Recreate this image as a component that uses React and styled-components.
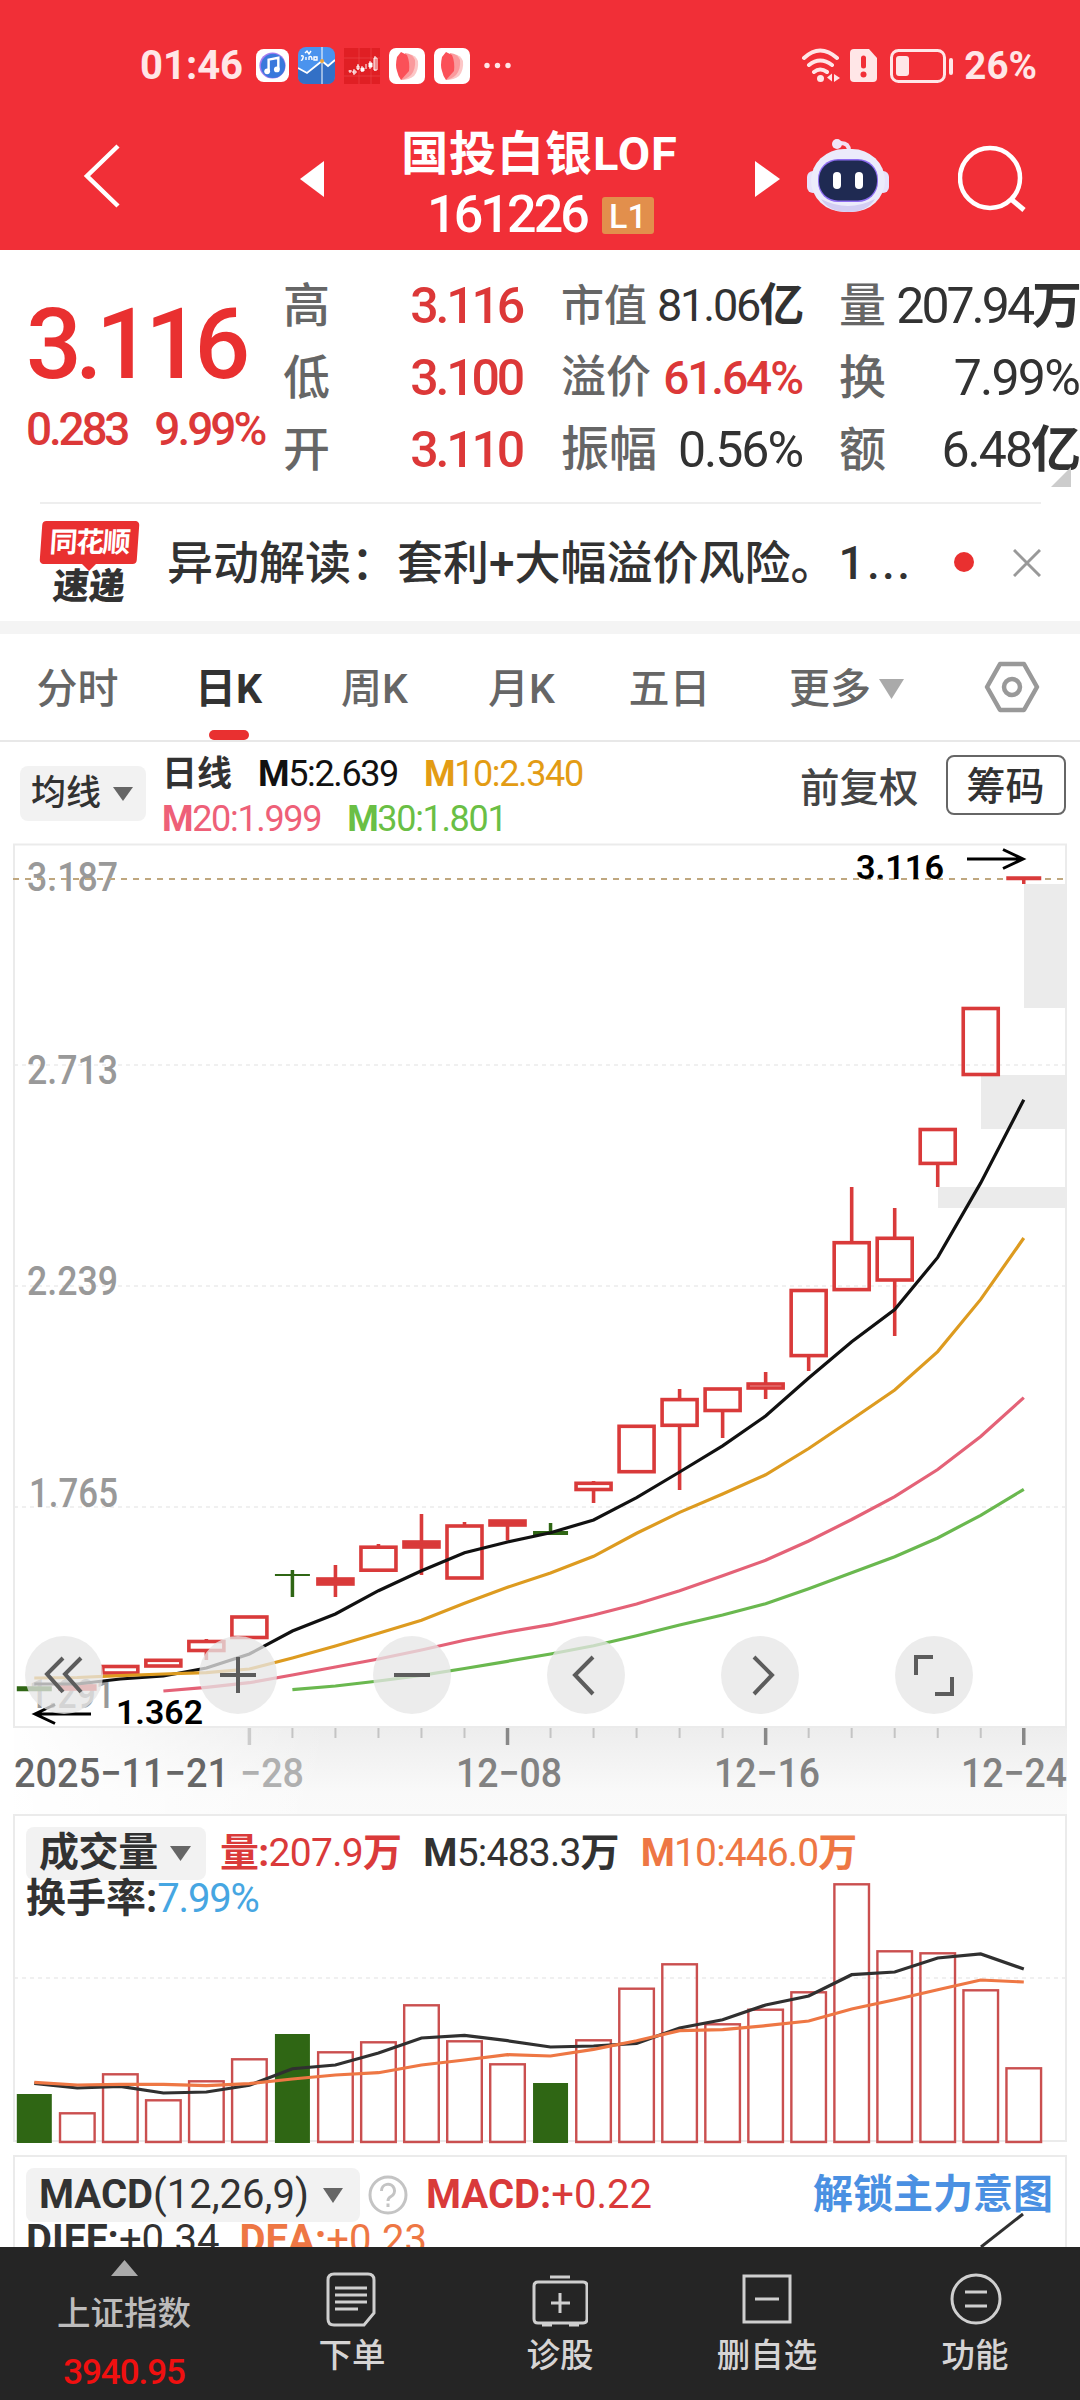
import styled, { createGlobalStyle } from 'styled-components';

const GlobalStyle = createGlobalStyle`
  * { box-sizing: border-box; }
  body {
    margin: 0;
    width: 1080px;
    height: 2400px;
    overflow: hidden;
    background: #ffffff;
    font-family: Roboto, "Noto Sans CJK SC", sans-serif;
    font-weight: 500;
    color: #323232;
  }
  b { font-weight: 700; }
  svg { display: block; flex: none; }
`;

const Screen = styled.div`
  width: 1080px;
  height: 2400px;
  display: flex;
  flex-direction: column;
  overflow: hidden;
  background: #ffffff;
`;

// generic number / label text
const Text = styled.span`
  display: block;
  white-space: nowrap;
  flex: none;
  font-size: ${props => props.$size}px;
  line-height: ${props => props.$line || 60}px;
  font-weight: ${props => props.$weight || 500};
  color: ${props => props.$color || 'inherit'};
  letter-spacing: ${props => props.$track || 0}em;
  margin-left: ${props => props.$left || 0}px;
`;

/* header */
const Header = styled.header`
  height: 250px;
  flex: none;
  background: #f12f37;
  color: #ffffff;
`;

const StatusBar = styled.div`
  height: 130px;
  padding: 1px 43px 0 140px;
  display: flex;
  align-items: center;
  color: #ffe6e7;
`;

const AppIcons = styled.div`
  display: flex;
  align-items: center;
  gap: 9px;
  margin-left: 13px;
  flex: 1;
`;

const StatusRight = styled.div`
  display: flex;
  align-items: center;
`;

const TitleBar = styled.div`
  height: 120px;
  display: grid;
  grid-template-columns: 300px 480px 300px;
`;

const TitleSide = styled.div`
  display: flex;
  align-items: flex-start;
  padding: ${props => props.$pad};
  gap: 69px;
`;

const TitleCenter = styled.div`
  display: flex;
  justify-content: space-between;
  align-items: flex-start;
  & > svg { margin-top: 31px; }
`;

const FundName = styled.div`
  display: flex;
  flex-direction: column;
  align-items: center;
`;

const CodeRow = styled.div`
  display: flex;
  align-items: center;
  gap: 15px;
  margin: 4px 0 0 2px;
`;

const LevelTag = styled.span`
  width: 52px;
  height: 37px;
  background: #e28f4c;
  border-radius: 3px;
  font-size: 34px;
  line-height: 38px;
  text-align: center;
`;

/* quote */
const Quote = styled.section`
  height: 252px;
  flex: none;
  position: relative;
  display: grid;
  grid-template-columns: 283px 239px 39px 241px 37px 240px;
  padding-top: 20px;
`;

const PriceBlock = styled.div`
  padding: 24px 0 0 26px;
`;

const ChangeRow = styled.div`
  display: flex;
  gap: 27px;
  margin-top: 3px;
`;

const StatColumn = styled.div`
  display: flex;
  flex-direction: column;
  grid-column: ${props => props.$col};
`;

const Stat = styled.div`
  height: 72px;
  display: flex;
  align-items: center;
  justify-content: space-between;
  white-space: nowrap;
`;

const Corner = styled.i`
  position: absolute;
  right: 9px;
  bottom: 15px;
  border-left: 20px solid transparent;
  border-bottom: 20px solid #cccccc;
`;

/* news */
const News = styled.section`
  height: 119px;
  flex: none;
  margin: 0 39px 0 40px;
  border-top: 2px solid #eeeeee;
  display: flex;
  align-items: center;
`;

const NewsLogo = styled.div`
  width: 98px;
  height: 84px;
  margin-top: 1px;
  display: flex;
  flex-direction: column;
  align-items: center;
`;

const LogoBadge = styled.div`
  width: 97px;
  height: 43px;
  background: #e93030;
  border-radius: 4px;
  transform: skewX(-4deg);
  color: #ffffff;
  font-size: 28px;
  font-weight: 700;
  line-height: 43px;
  letter-spacing: -1.5px;
  text-align: center;
  white-space: nowrap;
`;

const LogoPin = styled.i`
  border: 7px solid transparent;
  border-top-color: #e93030;
  border-bottom: 0;
`;

const LogoText = styled.div`
  font-size: 36px;
  font-weight: 900;
  line-height: 32px;
  transform: skewX(-5deg);
  white-space: nowrap;
`;

const Headline = styled.div`
  margin-left: 29px;
  width: 758px;
  font-size: 46px;
  font-weight: 500;
  line-height: 60px;
  white-space: nowrap;
  overflow: hidden;
  span {
    margin-left: 2px;
    letter-spacing: 2.3px;
  }
`;

const Dot = styled.i`
  width: 20px;
  height: 20px;
  border-radius: 50%;
  background: #e93030;
  margin: -2px 39px 0 auto;
`;

/* tabs */
const Tabs = styled.nav`
  height: 121px;
  flex: none;
  border-top: 13px solid #f4f4f4;
  border-bottom: 2px solid #e8e8e8;
  display: grid;
  grid-template-columns: 155px 147px 145px 149px 147px 207px 124px;
  color: #666666;
`;

const Tab = styled.div`
  position: relative;
  display: flex;
  align-items: center;
  justify-content: center;
  gap: 8px;
  white-space: nowrap;
  font-size: 41px;
  line-height: 106px;
  height: 106px;
  padding-top: ${props => (props.$icon ? 0 : 3)}px;
  font-weight: ${props => (props.$active ? 700 : 500)};
  color: ${props => (props.$active ? '#323232' : '#666666')};
`;

const ActiveBar = styled.i`
  position: absolute;
  bottom: 0;
  left: 54px;
  width: 40px;
  height: 10px;
  border-radius: 5px;
  background: #e93030;
`;

/* moving average bar */
const AverageBar = styled.section`
  height: 101px;
  flex: none;
  display: flex;
  align-items: flex-start;
  padding: 0 13px 0 20px;
`;

const Picker = styled.div`
  width: ${props => props.$width}px;
  height: ${props => props.$height}px;
  margin-top: ${props => props.$top || 0}px;
  padding-left: ${props => props.$pad}px;
  flex: none;
  background: #f2f2f2;
  border-radius: 8px;
  display: flex;
  align-items: center;
  gap: ${props => props.$gap || 12}px;
`;

const Legend = styled.div`
  width: 560px;
  margin: 10px 0 0 16px;
`;

const LegendRow = styled.div`
  display: flex;
  gap: ${props => props.$gap}px;
`;

const ChipButton = styled.div`
  width: 120px;
  height: 60px;
  margin: 13px 0 0 27px;
  border: 2px solid #666666;
  border-radius: 8px;
  font-size: 39px;
  line-height: 61px;
  text-align: center;
  white-space: nowrap;
`;

/* charts */
const PriceChart = styled.section`
  position: relative;
  height: 971px;
  flex: none;
`;

const ChartTools = styled.div`
  position: absolute;
  left: 25px;
  top: 793px;
  display: flex;
  gap: 96px;
`;

const ToolButton = styled.div`
  width: 78px;
  height: 78px;
  border-radius: 50%;
  background: rgba(230, 230, 230, 0.76);
`;

const Panel = styled.section`
  position: relative;
  height: ${props => props.$height}px;
  flex: none;
`;

const PanelLegend = styled.div`
  position: absolute;
  left: 26px;
  top: 12px;
  right: 27px;
`;

const PanelRow = styled.div`
  display: flex;
  align-items: center;
`;

const HelpIcon = styled.svg`
  margin-left: 8px;
`;

const PanelLink = styled(Text)`
  margin-left: auto;
`;

/* bottom bar */
const BottomBar = styled.footer`
  height: 153px;
  flex: none;
  position: relative;
  background: #252525;
  display: grid;
  grid-template-columns: 248px 208px 208px 206px 210px;
  color: #d6d4d4;
`;

const NavItem = styled.div`
  display: flex;
  flex-direction: column;
  align-items: center;
  padding-top: ${props => props.$top || 24}px;
`;

const Triangle = ({ w = 21, h = 15, color = '#666666' }) => (
  <svg width={w} height={h} viewBox="0 0 20 14" preserveAspectRatio="none">
    <path d="M0 0H20L10 14Z" fill={color} />
  </svg>
);

const FlameIcon = () => (
  <svg width="36" height="36" viewBox="0 0 36 36">
    <rect width="36" height="36" rx="7" fill="#fff" />
    <path d="M19 6Q27 7 29 13 30 22 25 28 20 32 12 32Z" fill="#fcc6c6" />
    <path d="M16 5Q24 6 26 12 27 21 22 27 18 31 12 32Z" fill="#fa9a9d" />
    <path d="M12 4 18 7Q21 14 20 23L12 32Q9 28 8 23 6 18 8 9Z" fill="#fb5058" />
  </svg>
);

const first = 34.3;
const step = 43.02;
const cx = i => first + i * step;
const points = (values, start = 0) =>
  values.map((v, i) => `${cx(i + start).toFixed(1)},${v}`).join(' ');

// [bodyTop, bodyBottom, wickTop, wickBottom]
const candles = [
  [1688.7, 1688.7, 1688.7, 1688.7, 'down', 5],
  [1686, 1689, 1686, 1689],
  [1666.5, 1673, 1665, 1673],
  [1660.3, 1666, 1659, 1666],
  [1641.5, 1650.5, 1639, 1660],
  [1617, 1637.5, 1617, 1637.5],
  [1575, 1575, 1570, 1597, 'down', 2],
  [1579, 1584, 1565, 1597],
  [1547.2, 1570.2, 1544, 1570],
  [1542, 1547, 1514, 1575],
  [1526, 1578, 1522, 1578],
  [1521, 1525, 1521, 1540.5],
  [1533, 1533, 1523, 1535, 'down', 4],
  [1483.3, 1489.5, 1481, 1503],
  [1426.3, 1471.7, 1426, 1471],
  [1399.6, 1425.3, 1389, 1490],
  [1389, 1410.5, 1389, 1438],
  [1384, 1388, 1372, 1399],
  [1290.5, 1355.6, 1290, 1371],
  [1242.7, 1289.6, 1187, 1289],
  [1238.3, 1280, 1208, 1336],
  [1129.5, 1163.4, 1129, 1187],
  [1008.5, 1074.5, 1008, 1074],
  [878.3, 878.3, 878, 884, 'flat', 4],
];

const ma5 = [1684, 1684, 1679, 1676, 1668, 1654, 1631, 1614, 1590.7, 1570.7, 1552.7, 1542, 1532.7, 1520, 1497.6, 1472, 1445.8, 1416, 1378, 1341.8, 1309.6, 1257.4, 1182.9, 1099.8];
const ma10 = [1678, 1677.5, 1675.7, 1674, 1672.7, 1669, 1658, 1646, 1633.3, 1620.3, 1603.3, 1587.3, 1573, 1556.3, 1533.3, 1512.4, 1494, 1474.8, 1448.5, 1419.5, 1390, 1351.6, 1299.4, 1238];
const ma20 = [1691, 1687.3, 1682.7, 1675, 1667, 1659, 1650, 1640.3, 1632, 1624.7, 1615, 1604, 1590.7, 1575.7, 1560.3, 1541, 1519.5, 1496.7, 1469.5, 1436.4, 1397.6];
const ma30 = [1689.7, 1686, 1681, 1675.3, 1668.5, 1661.3, 1654, 1645.7, 1635.7, 1625, 1615, 1603.7, 1588.7, 1572.7, 1556.7, 1538, 1515.3, 1489.3];

const volumes = [2094, 2113.3, 2074.3, 2100.3, 2081.3, 2059.3, 2034, 2052.3, 2042.3, 2005.3, 2041.3, 2064.3, 2083, 2040.3, 1988.7, 1964.3, 2024.3, 2009.7, 1992.3, 1884.3, 1951.3, 1953.3, 1990.3, 2068.3];
const vol5 = [2083.3, 2088, 2086.3, 2093, 2092, 2085.3, 2068.7, 2065, 2053, 2038, 2035.3, 2040.7, 2047, 2046, 2043.3, 2028, 2019.7, 2005, 1996, 1974.7, 1972, 1958, 1954, 1969];
const vol10 = [2082.3, 2085, 2084.3, 2084.3, 2085.7, 2083.7, 2079, 2075, 2072.7, 2065, 2060, 2054.7, 2056, 2049.3, 2040.7, 2030.7, 2029.7, 2025.7, 2021, 2009, 1999.7, 1989.7, 1980, 1982];

const priceLabels = [
  ['3.187', 891, 27, 91],
  ['2.713', 1084, 27, 91],
  ['2.239', 1295, 27, 91],
  ['1.765', 1507, 29, 89],
  ['1.291', 1708, 29, 86],
];

const dateLabels = [
  ['2025−11−21', 14, 215, '#666'],
  ['−28', 240, 64, '#b0b0b0'],
  ['12−08', 456, 106, '#828282'],
  ['12−16', 714, 106, '#828282'],
  ['12−24', 961, 106, '#828282'],
];

const Candle = ({ data, i }) => {
  const [top, bottom, high, low, kind, thick] = data;
  const x = cx(i);
  const color = kind === 'down' ? '#2f6614' : '#d93a3a';
  if (kind) {
    return (
      <g stroke={color}>
        <path d={`M${x - 17.5} ${top}H${x + 17.5}`} strokeWidth={thick} />
        {low > high && <path d={`M${x} ${high}V${low}`} strokeWidth="3.5" />}
      </g>
    );
  }
  return (
    <g stroke={color} strokeWidth="3.6" fill="none">
      {high < top && <path d={`M${x} ${high}V${top}`} />}
      {low > bottom && <path d={`M${x} ${bottom}V${low}`} />}
      <rect x={x - 17.5} y={top} width="35" height={bottom - top} fill={[7, 9, 11].includes(i) ? color : 'none'} />
    </g>
  );
};

const tools = ['M38 22 22 38 38 56M56 22 40 38 56 56', 'M21 39H57M39 21V57', 'M21 39H57', 'M46 21 28 39 46 58', 'M33 21 51 39 33 58', 'M21 39V21H38M57 41V58H40'];

const navItems = [
  ['下单', <path key="a" d="M9 3H43Q49 3 49 9V42L39 54H9Q3 54 3 48V9Q3 3 9 3ZM10 17H42M10 24H42M10 31H42M10 38H33" />],
  ['诊股', <path key="b" d="M17 6H37M5 11H50Q54 11 54 15V48Q54 52 50 52H5Q1 52 1 48V15Q1 11 5 11ZM27 22V42M18 32H37M9 54H19M36 54H46" />],
  ['删自选', <path key="c" d="M4 5H50V51H4ZM15 28H39" />],
  ['功能', <path key="d" d="M4 28A24 24 0 1 0 52 28A24 24 0 1 0 4 28M17 21H39M17 35H39" />],
];

const App = () => (
  <Screen>
    <GlobalStyle />
    <Header>
      <StatusBar>
        <Text $size={40} $weight={700}>01:46</Text>
        <AppIcons>
          <svg width="33" height="33" viewBox="0 0 34 34">
            <rect width="34" height="34" rx="8" fill="#fff" />
            <circle cx="17" cy="17" r="13.5" fill="#a77cf0" />
            <circle cx="17.5" cy="17.5" r="12.5" fill="#3a78dc" />
            <path d="M13 23V11L23 9V21" fill="none" stroke="#fff" strokeWidth="2.5" />
            <circle cx="11.5" cy="23" r="3" fill="#fff" />
            <circle cx="21.5" cy="21" r="3" fill="#fff" />
          </svg>
          <svg width="37" height="37" viewBox="0 0 37 37">
            <rect width="37" height="37" rx="8" fill="#4a93ee" />
            <path d="M0 21 9 26 24 14 30 19 37 13V29Q37 37 29 37H8Q0 37 0 29Z" fill="#3370c6" />
            <path d="M0 21 9 26 24 14 30 19 37 13" fill="none" stroke="#fff" strokeWidth="1.8" />
            <path d="M24 0V37" stroke="#fff" />
            <path d="M7 6 9 4 11 7 13 4M3 9Q6 8 5 11T3 13M8 10V13M11 13V10Q14 8 14 13M19 10H16V13H19Z" fill="none" stroke="#fff" strokeWidth="1.4" />
            <circle cx="24" cy="14" r="2" fill="#f0a43a" />
          </svg>
          <svg width="36" height="36" viewBox="0 0 36 36">
            <rect width="36" height="36" fill="#e01f24" />
            <path d="M0 10H36M0 28H36M15 0V36M27 0V36" stroke="#ee4a4e" strokeWidth=".6" />
            <path d="M6 22V25M10 21V27M14 16V22M18 18V24M22 16V21M26 13V21M31 8V23" stroke="#fff" strokeWidth="1" />
            <path d="M4.500 23H8M17 20H20V23H17ZM25 15H28V19H25Z" stroke="#fff" fill="#fff" strokeWidth="1" />
            <path d="M9 23H12V25H9ZM13 18H15V21H13ZM30 10H33V22H30Z" stroke="#fff" fill="none" strokeWidth="1" />
          </svg>
          <FlameIcon />
          <FlameIcon />
          <svg width="36" height="8" viewBox="0 0 36 8" fill="#ffe6e7">
            <circle cx="8" cy="3.500" r="2.700" /><circle cx="18.500" cy="3.500" r="2.700" /><circle cx="29" cy="3.500" r="2.700" />
          </svg>
        </AppIcons>
        <StatusRight>
          <svg width="41" height="36" viewBox="0 0 41 36" fill="none" stroke="#ffe6e7" strokeWidth="4" strokeLinecap="round">
            <path d="M3 10Q19-5 36 10M8 17Q19 8 31 17M13 24Q19 19 26 24" />
            <circle cx="19.500" cy="30.500" r="3.500" fill="#ffe6e7" stroke="none" />
            <path d="M26 29.500 31 25.500V33.500ZM33 26 39 30 33 34Z" fill="#ffe6e7" stroke="none" />
          </svg>
          <svg width="36" height="34" viewBox="-8 0 36 34">
            <path d="M4 0H19L27 9V29Q27 33 23 33H4Q0 33 0 29V4Q0 0 4 0Z" fill="#ffe6e7" />
            <path d="M13.500 9V17" stroke="#f12f37" strokeWidth="5" strokeLinecap="round" />
            <circle cx="13.500" cy="25.500" r="3" fill="#f12f37" />
          </svg>
          <svg width="76" height="34" viewBox="-12 0 76 34">
            <rect x="1.500" y="1.500" width="53" height="31" rx="7" fill="none" stroke="#ffe6e7" strokeWidth="3" />
            <rect x="6" y="7" width="13" height="20" rx="3" fill="#ffe6e7" />
            <rect x="59" y="9" width="4" height="17" rx="2" fill="#ffe6e7" />
          </svg>
          <Text $size={38.5} $weight={700} $left={10}>26%</Text>
        </StatusRight>
      </StatusBar>

      <TitleBar>
        <TitleSide $pad="13px 0 0 82px">
          <svg width="44" height="66" viewBox="0 0 44 66" fill="none" stroke="#fff" strokeWidth="4.500">
            <path d="M36 3 5 33 36 63" />
          </svg>
        </TitleSide>
        <TitleCenter>
          <svg width="24" height="36" viewBox="0 0 24 36"><path d="M24 0V36L0 18Z" fill="#fff" /></svg>
          <FundName>
            <Text $size={47} $weight={700} $line={48} $track={0.02}>国投白银LOF</Text>
            <CodeRow>
              <Text $size={52} $line={66} $track={-0.056}>161226</Text>
              <LevelTag>L1</LevelTag>
            </CodeRow>
          </FundName>
          <svg width="25" height="36" viewBox="0 0 25 36"><path d="M0 0V36L25 18Z" fill="#fff" /></svg>
        </TitleCenter>
        <TitleSide $pad="7px 0 0 27px">
          <svg width="82" height="78" viewBox="0 0 82 78">
            <path d="M42 14Q42 6 34 6H30" fill="none" stroke="#f3dff0" strokeWidth="4" />
            <circle cx="30" cy="7" r="5" fill="#f1e6fa" />
            <rect x="0" y="34" width="12" height="22" rx="6" fill="#e7e2fb" />
            <rect x="70" y="34" width="12" height="22" rx="6" fill="#e7e2fb" />
            <rect x="4" y="12" width="74" height="63" rx="33" fill="#ecebfb" />
            <path d="M14 62Q41 76 68 62Q60 75 41 75T14 62" fill="#d3cdf3" />
            <rect x="11" y="22" width="60" height="43" rx="20" fill="#8d6cf0" />
            <rect x="12" y="23.500" width="58" height="40" rx="19" fill="#1f2a52" />
            <rect x="26" y="35" width="8" height="17" rx="4" fill="#fff" />
            <rect x="48" y="35" width="8" height="17" rx="4" fill="#fff" />
          </svg>
          <svg width="70" height="78" viewBox="0 -7 70 78" fill="none" stroke="#fff" strokeWidth="4.500">
            <circle cx="32" cy="34" r="30" /><path d="M53 55 66 66" strokeWidth="5" />
          </svg>
        </TitleSide>
      </TitleBar>
    </Header>

    <Quote>
      <PriceBlock>
        <Text $size={98} $line={102} $color="#e93030" $track={-0.066}>3.116</Text>
        <ChangeRow>
          <Text $size={46} $line={61} $color="#dc3838" $track={-0.07}>0.283</Text>
          <Text $size={46} $line={61} $color="#dc3838" $track={-0.065}>9.99%</Text>
        </ChangeRow>
      </PriceBlock>
      <StatColumn $col={2}>
        {[['高', '3.116'], ['低', '3.100'], ['开', '3.110']].map(([k, v]) => (
          <Stat key={k}>
            <Text $size={47} $color="#666">{k}</Text>
            <Text $size={50} $color="#dc3838" $track={-0.063}>{v}</Text>
          </Stat>
        ))}
      </StatColumn>
      <StatColumn $col={4}>
        <Stat>
          <Text $size={43} $color="#666">市值</Text>
          <Text $size={45} $weight={400} $track={-0.048}>81.06<b>亿</b></Text>
        </Stat>
        <Stat>
          <Text $size={45} $color="#666">溢价</Text>
          <Text $size={46} $color="#dc3838" $track={-0.045}>61.64%</Text>
        </Stat>
        <Stat>
          <Text $size={48} $color="#666">振幅</Text>
          <Text $size={50} $weight={400} $track={-0.04}>0.56%</Text>
        </Stat>
      </StatColumn>
      <StatColumn $col={6}>
        <Stat>
          <Text $size={47} $color="#666">量</Text>
          <Text $size={50} $weight={400} $track={-0.06}>207.94<b>万</b></Text>
        </Stat>
        <Stat>
          <Text $size={47} $color="#666">换</Text>
          <Text $size={50} $weight={400} $track={-0.035}>7.99%</Text>
        </Stat>
        <Stat>
          <Text $size={47} $color="#666">额</Text>
          <Text $size={50} $weight={400} $track={-0.04}>6.48<b>亿</b></Text>
        </Stat>
      </StatColumn>
      <Corner />
    </Quote>

    <News>
      <NewsLogo>
        <LogoBadge>同花顺</LogoBadge>
        <LogoPin />
        <LogoText>速递</LogoText>
      </NewsLogo>
      <Headline>异动解读：套利+大幅溢价风险。<span>1...</span></Headline>
      <Dot />
      <svg width="28" height="28" viewBox="0 0 28 28" stroke="#999" strokeWidth="3"><path d="M1 1 27 27M27 1 1 27" /></svg>
    </News>

    <Tabs>
      <Tab>分时</Tab>
      <Tab $active>日K<ActiveBar /></Tab>
      <Tab>周K</Tab>
      <Tab>月K</Tab>
      <Tab>五日</Tab>
      <Tab>更多<Triangle w={25} h={20} color="#aaa" /></Tab>
      <Tab $icon>
        <svg width="56" height="52" viewBox="0 0 56 52" fill="none" stroke="#999" strokeWidth="4.500" strokeLinejoin="round">
          <path d="M16 3H40L53 26 40 49H16L3 26Z" /><circle cx="28" cy="26" r="8" />
        </svg>
      </Tab>
    </Tabs>

    <AverageBar>
      <Picker $width={126} $height={55} $top={24} $pad={11}>
        <Text $size={35} $line={62}>均线</Text>
        <Triangle w={20} h={14} />
      </Picker>
      <Legend>
        <LegendRow $gap={26}>
          <Text $size={35} $line={45} $weight={700}>日线</Text>
          <Text $size={36} $line={45} $weight={400} $color="#111" $track={-0.038}><b>M</b>5:2.639</Text>
          <Text $size={36} $line={45} $weight={400} $color="#e39c14" $track={-0.038}><b>M</b>10:2.340</Text>
        </LegendRow>
        <LegendRow $gap={26}>
          <Text $size={36} $line={45} $weight={400} $color="#ee6078" $track={-0.037}><b>M</b>20:1.999</Text>
          <Text $size={36} $line={45} $weight={400} $color="#6abf45" $track={-0.037}><b>M</b>30:1.801</Text>
        </LegendRow>
      </Legend>
      <Text $size={39.5} $line={94} $color="#444" $left={78}>前复权</Text>
      <ChipButton>筹码</ChipButton>
    </AverageBar>

    <PriceChart>
      <svg width="1080" height="971" viewBox="0 843 1080 971">
        <defs>
          <linearGradient id="axis" x1="0" y1="0" x2="0" y2="1">
            <stop offset="0" stopColor="#ededed" /><stop offset=".75" stopColor="#f9f9f9" /><stop offset="1" stopColor="#fafafa" />
          </linearGradient>
          <linearGradient id="axisFade">
            <stop offset="0" stopColor="#fff" /><stop offset="1" stopColor="#fff" stopOpacity="0" />
          </linearGradient>
        </defs>
        <rect x="14" y="1728" width="1053" height="86" fill="url(#axis)" />
        <rect x="0" y="1728" width="330" height="86" fill="url(#axisFade)" />
        <rect x="14" y="844.500" width="1052" height="882.500" fill="none" stroke="#ebebeb" strokeWidth="2" />
        <g stroke="#ececec" strokeWidth="1.500" strokeDasharray="4 4">
          <path d="M14 1065H1066M14 1286H1066M14 1507H1066" />
        </g>
        <g fill="#ebebeb">
          <rect x="1024" y="884" width="43" height="124" />
          <rect x="981" y="1075" width="86" height="54" />
          <rect x="938" y="1187" width="129" height="21" />
        </g>
        <g fill="#999" fontSize="40" fontWeight="500">
          {priceLabels.map(([t, y, x, w]) => (
            <text key={t} x={x} y={y} textLength={w} lengthAdjust="spacingAndGlyphs">{t}</text>
          ))}
        </g>
        <path d="M13 879H1066" stroke="#bfa77f" strokeWidth="2" strokeDasharray="6 6" />
        {candles.map((c, i) => <Candle key={i} data={c} i={i} />)}
        <g fill="none" strokeWidth="3.200">
          <polyline points={points(ma5)} stroke="#111" />
          <polyline points={points(ma10)} stroke="#dd9b20" />
          <polyline points={points(ma20, 3)} stroke="#e46277" />
          <polyline points={points(ma30, 6)} stroke="#6ab84f" />
        </g>
        <g fill="#000" fontSize="34" fontWeight="600">
          <text x="856" y="879" textLength="88" lengthAdjust="spacingAndGlyphs">3.116</text>
          <text x="116" y="1724" textLength="87" lengthAdjust="spacingAndGlyphs">1.362</text>
        </g>
        <path d="M967 859H1023M1003 849.500 1023 859 1003 868.500M91 1714H35M55 1704.500 35 1714 55 1723.500" fill="none" stroke="#000" strokeWidth="3" />
        <g>
          {Array.from({ length: 19 }, (_, n) => n + 5).map(i => {
            const major = i % 6 === 5;
            return (
              <path key={i} d={`M${cx(i)} 1728V${major ? 1745 : 1738}`} stroke={i === 5 ? '#ccc' : major ? '#888' : '#c4c4c4'} strokeWidth={major ? 3.5 : 2} />
            );
          })}
        </g>
        <g fontSize="40" fontWeight="500">
          {dateLabels.map(([t, x, w, fill]) => (
            <text key={t} x={x} y="1787" fill={fill} textLength={w} lengthAdjust="spacingAndGlyphs">{t}</text>
          ))}
        </g>
      </svg>
      <ChartTools>
        {tools.map(d => (
          <ToolButton key={d}>
            <svg width="78" height="78" fill="none" stroke="#5c5c5c" strokeWidth="4"><path d={d} /></svg>
          </ToolButton>
        ))}
      </ChartTools>
    </PriceChart>

    <Panel $height={341}>
      <svg width="1080" height="341" viewBox="0 1814 1080 341">
        <rect x="14" y="1815" width="1052" height="326" fill="none" stroke="#ebebeb" strokeWidth="2" />
        <path d="M14 1978H1066" stroke="#ececec" strokeWidth="1.500" strokeDasharray="4 4" />
        {volumes.map((y, i) =>
          i % 6 === 0 && i < 13 ? (
            <rect key={i} x={cx(i) - 17.5} y={y} width="35" height={2143 - y} fill="#2f6614" />
          ) : (
            <rect key={i} x={cx(i) - 17.3} y={y} width="34.600" height={2142 - y} fill="none" stroke="#ca4f4f" strokeWidth="2.400" />
          ))}
        <g fill="none" strokeWidth="3.200">
          <polyline points={points(vol5)} stroke="#303030" />
          <polyline points={points(vol10)} stroke="#ee7744" />
        </g>
      </svg>
      <PanelLegend>
        <PanelRow>
          <Picker $width={180} $height={53} $pad={13}>
            <Text $size={40} $line={62} $weight={700} $track={-0.01}>成交量</Text>
            <Triangle />
          </Picker>
          <Text $size={39} $line={54} $weight={400} $color="#da3a3a" $track={-0.018} $left={14}><b>量:</b>207.9<b>万</b></Text>
          <Text $size={39} $line={54} $weight={400} $track={-0.02} $left={22}><b>M</b>5:483.3<b>万</b></Text>
          <Text $size={39} $line={54} $weight={400} $color="#ee7744" $track={-0.023} $left={22}><b>M</b>10:446.0<b>万</b></Text>
        </PanelRow>
        <PanelRow>
          <Text $size={40} $line={38} $weight={700}>换手率:</Text>
          <Text $size={40} $line={38} $weight={400} $color="#46a6e2" $track={-0.03}>7.99%</Text>
        </PanelRow>
      </PanelLegend>
    </Panel>

    <Panel $height={92}>
      <svg width="1080" height="92" viewBox="0 2155 1080 92">
        <path d="M14 2260V2156H1066V2260" fill="none" stroke="#ebebeb" strokeWidth="2" />
        <path d="M1023 2214 981 2247" stroke="#303030" strokeWidth="3" />
      </svg>
      <PanelLegend>
        <PanelRow>
          <Picker $width={334} $height={54} $pad={13} $gap={14}>
            <Text $size={40} $weight={400}><b>MACD</b>(12,26,9)</Text>
            <Triangle w={20} />
          </Picker>
          <HelpIcon width="40" height="40" viewBox="0 0 40 40" fill="none" stroke="#c4c4c4" strokeWidth="3">
            <circle cx="20" cy="20" r="18" />
            <path d="M13.500 16A6.500 6.500 0 1 1 23 21.500Q20 23 20 26M20 28.500V32" />
          </HelpIcon>
          <Text $size={40} $line={54} $weight={400} $color="#d93a3a" $left={18}><b>MACD:</b>+0.22</Text>
          <PanelLink $size={40} $line={56} $weight={700} $color="#4a90e2">解锁主力意图</PanelLink>
        </PanelRow>
        <PanelRow>
          <Text $size={40} $line={34} $weight={400}><b>DIFF:</b>+0.34</Text>
          <Text $size={40} $line={34} $weight={400} $color="#ee7744" $left={20}><b>DEA:</b>+0.23</Text>
        </PanelRow>
      </PanelLegend>
    </Panel>

    <BottomBar>
      <NavItem $top={13}>
        <svg width="27" height="16" viewBox="0 0 27 16"><path d="M13.500 0 27 16H0Z" fill="#aaa" /></svg>
        <Text $size={33.5} $line={76} $color="#bdbcbc">上证指数</Text>
        <Text $size={35} $line={42} $color="#f01010" $track={-0.03}>3940.95</Text>
      </NavItem>
      {navItems.map(([label, icon]) => (
        <NavItem key={label}>
          <svg width="56" height="56" viewBox="-1 0 56 56" fill="none" stroke="#cfcfcf" strokeWidth="3">{icon}</svg>
          <Text $size={33.5} $line={58}>{label}</Text>
        </NavItem>
      ))}
    </BottomBar>
  </Screen>
);

export default App;
